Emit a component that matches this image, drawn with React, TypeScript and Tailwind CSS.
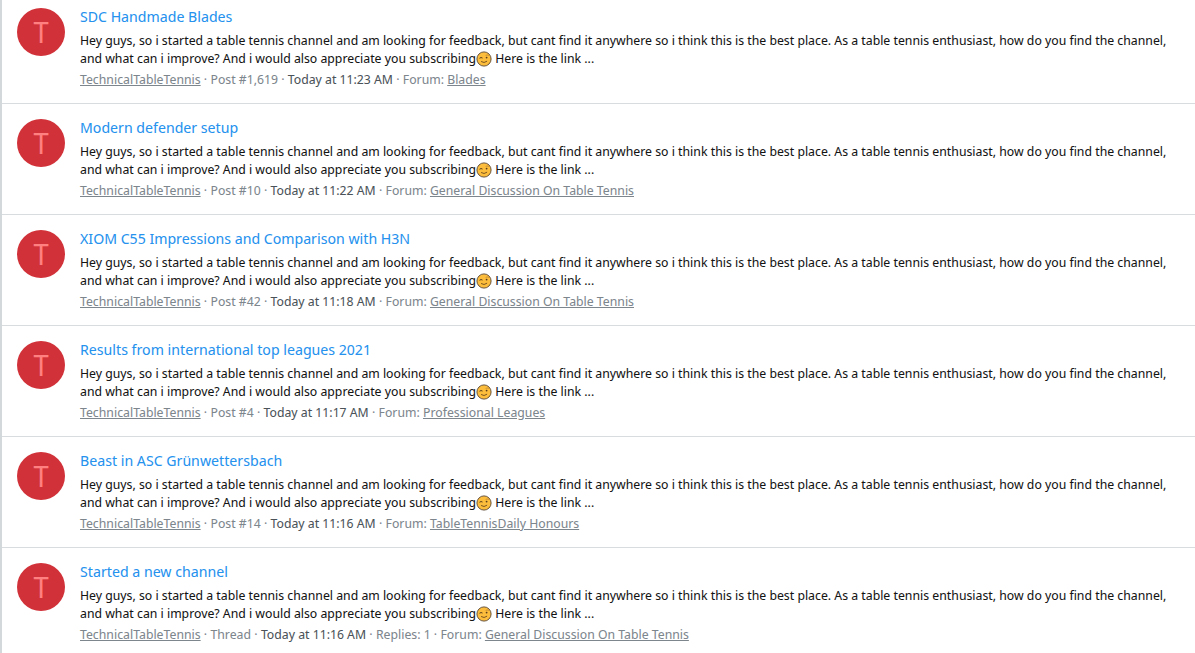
import React from 'react';

interface Post {
  title: string;
  kind: string;
  time: string;
  replies?: number;
  forum: string;
}

const posts: Post[] = [
  { title: 'SDC Handmade Blades', kind: 'Post #1,619', time: 'Today at 11:23 AM', forum: 'Blades' },
  { title: 'Modern defender setup', kind: 'Post #10', time: 'Today at 11:22 AM', forum: 'General Discussion On Table Tennis' },
  { title: 'XIOM C55 Impressions and Comparison with H3N', kind: 'Post #42', time: 'Today at 11:18 AM', forum: 'General Discussion On Table Tennis' },
  { title: 'Results from international top leagues 2021', kind: 'Post #4', time: 'Today at 11:17 AM', forum: 'Professional Leagues' },
  { title: 'Beast in ASC Grünwettersbach', kind: 'Post #14', time: 'Today at 11:16 AM', forum: 'TableTennisDaily Honours' },
  { title: 'Started a new channel', kind: 'Thread', time: 'Today at 11:16 AM', replies: 1, forum: 'General Discussion On Table Tennis' },
];

const WinkIcon: React.FC = () => (
  <svg viewBox="0 0 16 16" className="inline-block size-4 align-text-bottom" role="img" aria-label="Wink">
    <circle cx="8" cy="8" r="7.1" fill="#fcbc3c" stroke="#5a4632" strokeWidth="0.9" />
    <path d="M10 4.2 Q11.2 3.5 12.4 4.3" fill="none" stroke="#a8732a" strokeWidth="0.6" strokeLinecap="round" />
    <path d="M3.8 7 Q5 5.9 6.2 6.8" fill="none" stroke="#5a3d18" strokeWidth="1" strokeLinecap="round" />
    <circle cx="10.6" cy="6.6" r="0.9" fill="#5a3d18" />
    <path d="M5.4 10.7 Q8 12.7 10.8 10.4" fill="none" stroke="#6b4a1e" strokeWidth="0.9" strokeLinecap="round" />
  </svg>
);

const PostRow: React.FC<{ post: Post }> = ({ post }) => (
  <li className="flex gap-[15px] border-t border-[#d9dcde] px-[15px] pt-[15px] pb-4 first:border-t-0 first:pt-2">
    <a
      href="#"
      className="flex size-12 shrink-0 items-center justify-center rounded-full bg-[#d13138] text-[29px] leading-[44px] text-[#ff8080]"
    >
      T
    </a>
    <div className="min-w-0 flex-1">
      <h3 className="text-[15px] leading-4">
        <a href="#" className="text-[#2692ee]">{post.title}</a>
      </h3>
      <p className="mt-[7px] text-[13px] leading-[18px] text-[#141414]">
        Hey guys, so i started a table tennis channel and am looking for feedback, but cant find it anywhere so i think
        this is the best place. As a table tennis enthusiast, how do you find the channel, and what can i improve? And i
        would also appreciate you subscribing
        <WinkIcon /> Here is the link ...
      </p>
      <div className="mt-1 text-[13px] leading-4 text-[#7d868d]">
        <a href="#" className="underline">TechnicalTableTennis</a>
        {' · '}
        {post.kind}
        {' · '}
        <time className="text-[#4b5359]">{post.time}</time>
        {post.replies !== undefined && ` · Replies: ${post.replies}`}
        {' · Forum: '}
        <a href="#" className="underline">{post.forum}</a>
      </div>
    </div>
  </li>
);

export default function App() {
  return (
    <ul className="border-l-2 border-[#d3d9db] bg-white font-['Noto_Sans_Display','Noto_Sans',sans-serif]">
      {posts.map((post) => (
        <PostRow key={post.title} post={post} />
      ))}
    </ul>
  );
}
